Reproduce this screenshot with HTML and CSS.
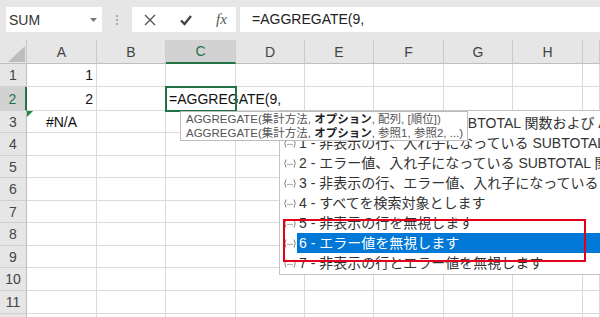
FILE: index.html
```html
<!DOCTYPE html>
<html>
<head>
<meta charset="utf-8">
<link rel="stylesheet" href="styles.css">
</head>
<body>

<div class="topbar">
    <div class="namebox">
        <span>SUM</span>
        <svg width="7" height="4" viewBox="0 0 7 4"><path d="M0 0 L7 0 L3.5 4 Z" fill="#7a7a7a"/></svg>
    </div>
    <div class="grip"><i></i><i></i><i></i></div>
    <div class="fbtns">
        <svg width="12" height="12" viewBox="0 0 12 12"><path d="M1 1 L11 11 M11 1 L1 11" stroke="#555" stroke-width="1.4" fill="none"/></svg>
        <svg width="12" height="12" viewBox="0 0 12 12"><path d="M1 6.5 L4.5 10 L11 2" stroke="#444" stroke-width="2.4" fill="none"/></svg>
        <span class="fx">fx</span>
    </div>
    <div class="finput">=AGGREGATE(9,</div>
</div>

<div class="sheet">
    <div class="corner"><svg width="27" height="24" viewBox="0 0 27 24"><path d="M8 22 L25 22 L25 6 Z" fill="#bdbdbd"/></svg></div>
    <div class="ch">A</div><div class="ch">B</div><div class="ch sel-col">C</div><div class="ch">D</div><div class="ch">E</div><div class="ch">F</div><div class="ch">G</div><div class="ch">H</div><div class="ch"></div>

    <div class="rh">1</div><div class="c num">1</div><div class="c"></div><div class="c"></div><div class="c"></div><div class="c"></div><div class="c"></div><div class="c"></div><div class="c"></div><div class="c"></div>
    <div class="rh sel-row">2</div><div class="c num">2</div><div class="c"></div><div class="c active">=AGGREGATE(9,<span class="caret"></span></div><div class="c"></div><div class="c"></div><div class="c"></div><div class="c"></div><div class="c"></div><div class="c"></div>
    <div class="rh">3</div><div class="c err"><span class="flag"></span>#N/A</div><div class="c"></div><div class="c"></div><div class="c"></div><div class="c"></div><div class="c"></div><div class="c"></div><div class="c"></div><div class="c"></div>
    <div class="rh">4</div><div class="c"></div><div class="c"></div><div class="c"></div><div class="c"></div><div class="c"></div><div class="c"></div><div class="c"></div><div class="c"></div><div class="c"></div>
    <div class="rh">5</div><div class="c"></div><div class="c"></div><div class="c"></div><div class="c"></div><div class="c"></div><div class="c"></div><div class="c"></div><div class="c"></div><div class="c"></div>
    <div class="rh">6</div><div class="c"></div><div class="c"></div><div class="c"></div><div class="c"></div><div class="c"></div><div class="c"></div><div class="c"></div><div class="c"></div><div class="c"></div>
    <div class="rh">7</div><div class="c"></div><div class="c"></div><div class="c"></div><div class="c"></div><div class="c"></div><div class="c"></div><div class="c"></div><div class="c"></div><div class="c"></div>
    <div class="rh">8</div><div class="c"></div><div class="c"></div><div class="c"></div><div class="c"></div><div class="c"></div><div class="c"></div><div class="c"></div><div class="c"></div><div class="c"></div>
    <div class="rh">9</div><div class="c"></div><div class="c"></div><div class="c"></div><div class="c"></div><div class="c"></div><div class="c"></div><div class="c"></div><div class="c"></div><div class="c"></div>
    <div class="rh">10</div><div class="c"></div><div class="c"></div><div class="c"></div><div class="c"></div><div class="c"></div><div class="c"></div><div class="c"></div><div class="c"></div><div class="c"></div>
    <div class="rh">11</div><div class="c"></div><div class="c"></div><div class="c"></div><div class="c"></div><div class="c"></div><div class="c"></div><div class="c"></div><div class="c"></div><div class="c"></div>
    <div class="rh">12</div><div class="c"></div><div class="c"></div><div class="c"></div><div class="c"></div><div class="c"></div><div class="c"></div><div class="c"></div><div class="c"></div><div class="c"></div>
</div>

<!-- auto complete list -->
<div class="dropdown">
    <div class="item"><svg class="ico" viewBox="0 0 14 9"><path d="M3 0.5 Q0.6 4.5 3 8.5 M11 0.5 Q13.4 4.5 11 8.5" stroke="#808080" stroke-width="1" fill="none"/><circle cx="5" cy="5.5" r="0.7" fill="#808080"/><circle cx="7" cy="5.5" r="0.7" fill="#808080"/><circle cx="9" cy="5.5" r="0.7" fill="#808080"/></svg><span class="txt">0 - 入れ子になっている SUBTOTAL 関数および AGGREGATE 関数を無視します</span></div>
    <div class="item"><svg class="ico" viewBox="0 0 14 9"><path d="M3 0.5 Q0.6 4.5 3 8.5 M11 0.5 Q13.4 4.5 11 8.5" stroke="#808080" stroke-width="1" fill="none"/><circle cx="5" cy="5.5" r="0.7" fill="#808080"/><circle cx="7" cy="5.5" r="0.7" fill="#808080"/><circle cx="9" cy="5.5" r="0.7" fill="#808080"/></svg><span class="txt">1 - 非表示の行、入れ子になっている SUBTOTAL 関数および AGGREGATE 関数を無視します</span></div>
    <div class="item"><svg class="ico" viewBox="0 0 14 9"><path d="M3 0.5 Q0.6 4.5 3 8.5 M11 0.5 Q13.4 4.5 11 8.5" stroke="#808080" stroke-width="1" fill="none"/><circle cx="5" cy="5.5" r="0.7" fill="#808080"/><circle cx="7" cy="5.5" r="0.7" fill="#808080"/><circle cx="9" cy="5.5" r="0.7" fill="#808080"/></svg><span class="txt">2 - エラー値、入れ子になっている SUBTOTAL 関数および AGGREGATE 関数を無視します</span></div>
    <div class="item"><svg class="ico" viewBox="0 0 14 9"><path d="M3 0.5 Q0.6 4.5 3 8.5 M11 0.5 Q13.4 4.5 11 8.5" stroke="#808080" stroke-width="1" fill="none"/><circle cx="5" cy="5.5" r="0.7" fill="#808080"/><circle cx="7" cy="5.5" r="0.7" fill="#808080"/><circle cx="9" cy="5.5" r="0.7" fill="#808080"/></svg><span class="txt">3 - 非表示の行、エラー値、入れ子になっている SUBTOTAL 関数および AGGREGATE 関数を無視します</span></div>
    <div class="item"><svg class="ico" viewBox="0 0 14 9"><path d="M3 0.5 Q0.6 4.5 3 8.5 M11 0.5 Q13.4 4.5 11 8.5" stroke="#808080" stroke-width="1" fill="none"/><circle cx="5" cy="5.5" r="0.7" fill="#808080"/><circle cx="7" cy="5.5" r="0.7" fill="#808080"/><circle cx="9" cy="5.5" r="0.7" fill="#808080"/></svg><span class="txt">4 - すべてを検索対象とします</span></div>
    <div class="item"><svg class="ico" viewBox="0 0 14 9"><path d="M3 0.5 Q0.6 4.5 3 8.5 M11 0.5 Q13.4 4.5 11 8.5" stroke="#808080" stroke-width="1" fill="none"/><circle cx="5" cy="5.5" r="0.7" fill="#808080"/><circle cx="7" cy="5.5" r="0.7" fill="#808080"/><circle cx="9" cy="5.5" r="0.7" fill="#808080"/></svg><span class="txt">5 - 非表示の行を無視します</span></div>
    <div class="item selected"><svg class="ico" viewBox="0 0 14 9"><path d="M3 0.5 Q0.6 4.5 3 8.5 M11 0.5 Q13.4 4.5 11 8.5" stroke="#808080" stroke-width="1" fill="none"/><circle cx="5" cy="5.5" r="0.7" fill="#808080"/><circle cx="7" cy="5.5" r="0.7" fill="#808080"/><circle cx="9" cy="5.5" r="0.7" fill="#808080"/></svg><span class="txt">6 - エラー値を無視します</span></div>
    <div class="item"><svg class="ico" viewBox="0 0 14 9"><path d="M3 0.5 Q0.6 4.5 3 8.5 M11 0.5 Q13.4 4.5 11 8.5" stroke="#808080" stroke-width="1" fill="none"/><circle cx="5" cy="5.5" r="0.7" fill="#808080"/><circle cx="7" cy="5.5" r="0.7" fill="#808080"/><circle cx="9" cy="5.5" r="0.7" fill="#808080"/></svg><span class="txt">7 - 非表示の行とエラー値を無視します</span></div>
</div>

<!-- syntax tip -->
<div class="tip">
    <div>AGGREGATE(集計方法, <b>オプション</b>, 配列, [順位])</div>
    <div>AGGREGATE(集計方法, <b>オプション</b>, 参照1, 参照2, ...)</div>
</div>

<div class="mark"></div>

</body>
</html>
```

FILE: styles.css
```css
body {
  margin: 0;
  width: 600px;
  height: 317px;
  overflow: hidden;
  position: relative;
  background: #fff;
  font-family: "Liberation Sans", "Noto Sans CJK JP", sans-serif;
  color: #222;
}

/* formula bar */
.topbar {
  height: 40px;
  box-sizing: border-box;
  padding: 7px 0 0 6px;
  background: #e6e6e6;
  display: flex;
  align-items: flex-start;
}

.namebox {
  width: 96px;
  height: 25px;
  box-sizing: border-box;
  background: #fff;
  display: flex;
  align-items: center;
  justify-content: space-between;
  padding: 0 5px 0 3px;
  font-size: 14px;
  color: #333;
}

.grip {
  width: 30px;
  height: 25px;
  display: flex;
  flex-direction: column;
  align-items: center;
  justify-content: center;
  gap: 2px;
}

.grip i {
  display: block;
  width: 2px;
  height: 2px;
  background: #aaa;
}

.fbtns {
  width: 104px;
  height: 25px;
  background: #fff;
  display: flex;
  align-items: center;
  gap: 24px;
  padding-left: 12px;
  box-sizing: border-box;
}

.fx {
  font-family: "Liberation Serif", serif;
  font-style: italic;
  font-size: 15px;
  color: #555;
}

.finput {
  flex: 1;
  height: 25px;
  margin-left: 4px;
  background: #fff;
  padding-left: 12px;
  font-size: 14px;
  line-height: 25px;
  color: #222;
}

/* grid */
.sheet {
  display: grid;
  grid-template-columns: 27px 70px 69px 70px 69px 69px 70px 69px 70px 17px;
  grid-template-rows: 24px 23px 24px 22px 23px 22px 23px 22px 23px 22px 23px 23px 23px;
  font-size: 14px;
}

.corner {
  background: #e6e6e6;
  border-right: 1px solid #c6c6c6;
  border-bottom: 1px solid #bfbfbf;
  box-sizing: border-box;
}

.corner svg {
  display: block;
}

.ch {
  background: #e6e6e6;
  border-right: 1px solid #cacaca;
  border-bottom: 1px solid #bfbfbf;
  box-sizing: border-box;
  display: flex;
  align-items: center;
  justify-content: center;
  color: #444;
}

.ch.sel-col {
  background: #d2d2d2;
  color: #217346;
  border-bottom: 2px solid #217346;
}

.rh {
  background: #e6e6e6;
  border-right: 1px solid #bfbfbf;
  border-bottom: 1px solid #d0d0d0;
  box-sizing: border-box;
  display: flex;
  align-items: center;
  justify-content: center;
  color: #444;
}

.rh.sel-row {
  background: #d2d2d2;
  color: #217346;
  border-right: 2px solid #217346;
}

.c {
  border-right: 1px solid #dadada;
  border-bottom: 1px solid #dadada;
  box-sizing: border-box;
  display: flex;
  align-items: center;
  padding: 0 3px;
  white-space: nowrap;
  position: relative;
  color: #111;
}

.num {
  justify-content: flex-end;
}

.err {
  justify-content: center;
}

.flag {
  position: absolute;
  left: 0;
  top: 0;
  width: 0;
  height: 0;
  border-top: 6px solid #1e8a3c;
  border-right: 6px solid transparent;
}

.active {
  outline: 2px solid #217346;
  outline-offset: -1px;
  z-index: 1;
  padding-left: 3px;
}

.caret {
  display: inline-block;
  width: 1px;
  height: 19px;
  background: #000;
  margin-left: 1px;
}

/* popups */
.dropdown {
  position: absolute;
  left: 279px;
  top: 110px;
  width: 340px;
  box-sizing: border-box;
  padding: 2px 0 1px;
  background: #fff;
  border: 1px solid #c4c4c4;
  z-index: 2;
  font-size: 14px;
  color: #333;
}

.item {
  height: 20px;
  display: flex;
  align-items: center;
  white-space: nowrap;
}

.ico {
  width: 14px;
  height: 9px;
  margin: 0 0 0 3px;
  flex: none;
}

.txt {
  flex: 1;
  height: 20px;
  line-height: 20px;
  padding-left: 2px;
}

.item.selected .txt {
  background: #0078d7;
  color: #fff;
}

.tip {
  position: absolute;
  left: 180px;
  top: 111px;
  width: 288px;
  box-sizing: border-box;
  padding: 0 5px;
  background: #fff;
  border: 1px solid #bcbcbc;
  z-index: 3;
  font-size: 11.5px;
  line-height: 14px;
  color: #555;
  white-space: nowrap;
}

.tip b {
  color: #222;
}

.mark {
  position: absolute;
  left: 283px;
  top: 219px;
  width: 303px;
  height: 43px;
  box-sizing: border-box;
  border: 2px solid #e2001a;
  z-index: 4;
}
```
